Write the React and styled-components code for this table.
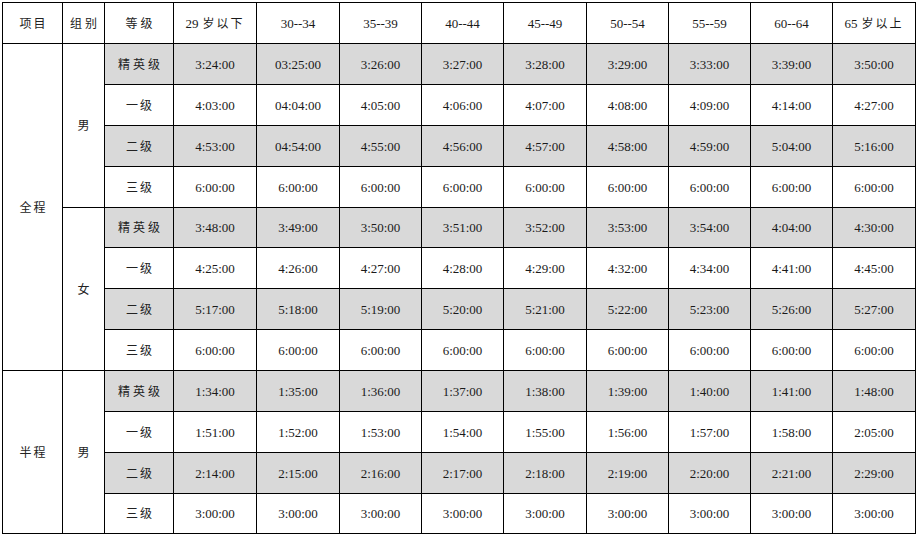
import React from "react";
import styled, { createGlobalStyle } from "styled-components";

const GlobalStyle = createGlobalStyle`
  html, body { margin: 0; padding: 0; background: #fff; }
  body { font-family: "Liberation Serif", "Noto Sans CJK SC", serif; color: #1a1a1a; }
`;

const Page = styled.div`
  padding: 2px 0 0 2px;
`;

const Table = styled.table`
  border-collapse: collapse;
  table-layout: fixed;
  width: 914px;
`;

const Row = styled.tr`
  height: ${(p) => p.$h}px;
`;

const Cell = styled.td`
  border: 1px solid #000;
  padding: 0;
  text-align: center;
  vertical-align: middle;
  font-size: 13px;
  line-height: 1;
  background: ${(p) => (p.$shade ? "#d9d9d9" : "#fff")};
`;

const Zh = styled.span`
  font-family: "Noto Sans CJK SC", sans-serif;
  font-size: 12px;
  letter-spacing: ${(p) => p.$sp ?? 3}px;
  margin-right: -${(p) => p.$sp ?? 3}px;
  color: #222;
`;

const Age = styled.span`
  font-size: 13px;
`;

const AgeZh = styled.span`
  font-family: "Noto Sans CJK SC", sans-serif;
  font-size: 12px;
  letter-spacing: 2px;
  margin-left: 4px;
`;

const widths = [60, 42, 69, 83, 83, 82, 82, 83, 82, 82, 82, 83];

const headers = ["30--34", "35--39", "40--44", "45--49", "50--54", "55--59", "60--64"];

const groups = [
  {
    item: "全程",
    sexes: [
      {
        sex: "男",
        rows: [
          ["精英级", ["3:24:00", "03:25:00", "3:26:00", "3:27:00", "3:28:00", "3:29:00", "3:33:00", "3:39:00", "3:50:00"]],
          ["一级", ["4:03:00", "04:04:00", "4:05:00", "4:06:00", "4:07:00", "4:08:00", "4:09:00", "4:14:00", "4:27:00"]],
          ["二级", ["4:53:00", "04:54:00", "4:55:00", "4:56:00", "4:57:00", "4:58:00", "4:59:00", "5:04:00", "5:16:00"]],
          ["三级", Array(9).fill("6:00:00")],
        ],
      },
      {
        sex: "女",
        rows: [
          ["精英级", ["3:48:00", "3:49:00", "3:50:00", "3:51:00", "3:52:00", "3:53:00", "3:54:00", "4:04:00", "4:30:00"]],
          ["一级", ["4:25:00", "4:26:00", "4:27:00", "4:28:00", "4:29:00", "4:32:00", "4:34:00", "4:41:00", "4:45:00"]],
          ["二级", ["5:17:00", "5:18:00", "5:19:00", "5:20:00", "5:21:00", "5:22:00", "5:23:00", "5:26:00", "5:27:00"]],
          ["三级", Array(9).fill("6:00:00")],
        ],
      },
    ],
  },
  {
    item: "半程",
    sexes: [
      {
        sex: "男",
        rows: [
          ["精英级", ["1:34:00", "1:35:00", "1:36:00", "1:37:00", "1:38:00", "1:39:00", "1:40:00", "1:41:00", "1:48:00"]],
          ["一级", ["1:51:00", "1:52:00", "1:53:00", "1:54:00", "1:55:00", "1:56:00", "1:57:00", "1:58:00", "2:05:00"]],
          ["二级", ["2:14:00", "2:15:00", "2:16:00", "2:17:00", "2:18:00", "2:19:00", "2:20:00", "2:21:00", "2:29:00"]],
          ["三级", Array(9).fill("3:00:00")],
        ],
      },
    ],
  },
];

const rowHeights = [41, 41, 41, 41, 41, 40, 41, 41, 41, 41, 41, 41, 40];

export default function App() {
  let idx = 0;
  const bodyRows = [];
  groups.forEach((g) => {
    const total = g.sexes.reduce((a, s) => a + s.rows.length, 0);
    g.sexes.forEach((s, si) => {
      s.rows.forEach(([level, vals], ri) => {
        idx += 1;
        const shade = ri === 0 || ri === 2;
        bodyRows.push(
          <Row key={`${g.item}-${s.sex}-${level}-${si}`} $h={rowHeights[idx]}>
            {si === 0 && ri === 0 && (
              <Cell rowSpan={total}>
                <Zh $sp={2}>{g.item}</Zh>
              </Cell>
            )}
            {ri === 0 && (
              <Cell rowSpan={s.rows.length}>
                <Zh>{s.sex}</Zh>
              </Cell>
            )}
            <Cell $shade={shade}>
              <Zh $sp={level.length === 3 ? 3 : 2}>{level}</Zh>
            </Cell>
            {vals.map((v, i) => (
              <Cell key={i} $shade={shade}>
                {v}
              </Cell>
            ))}
          </Row>
        );
      });
    });
  });

  return (
    <>
      <GlobalStyle />
      <Page>
        <Table>
          <colgroup>
            {widths.map((w, i) => (
              <col key={i} style={{ width: w }} />
            ))}
          </colgroup>
          <tbody>
            <Row $h={rowHeights[0]}>
              <Cell>
                <Zh $sp={2}>项目</Zh>
              </Cell>
              <Cell>
                <Zh $sp={3}>组别</Zh>
              </Cell>
              <Cell>
                <Zh $sp={3}>等级</Zh>
              </Cell>
              <Cell>
                <Age>29</Age>
                <AgeZh>岁以下</AgeZh>
              </Cell>
              {headers.map((h) => (
                <Cell key={h}>{h}</Cell>
              ))}
              <Cell>
                <Age>65</Age>
                <AgeZh>岁以上</AgeZh>
              </Cell>
            </Row>
            {bodyRows}
          </tbody>
        </Table>
      </Page>
    </>
  );
}
